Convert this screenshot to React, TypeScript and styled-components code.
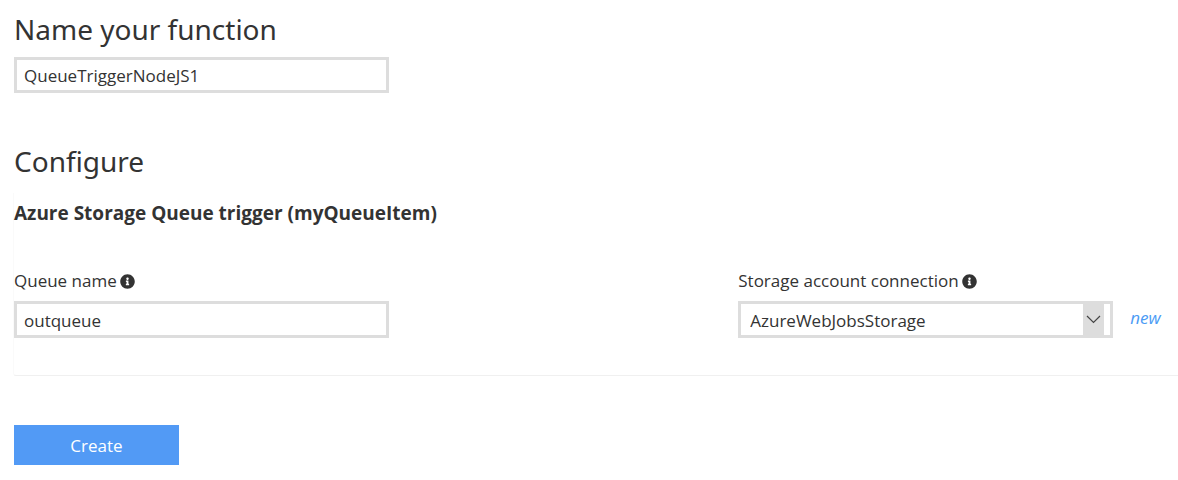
import React from 'react';
import styled, { createGlobalStyle } from 'styled-components';
import { FaInfoCircle } from 'react-icons/fa';

const GlobalStyle = createGlobalStyle`
  *, *::before, *::after { box-sizing: border-box; }
  body {
    margin: 0;
    background: #fff;
    color: #333;
    font-family: 'Segoe UI', 'Open Sans', 'Noto Sans', sans-serif;
    font-size: 17px;
    line-height: 24px;
  }
`;

const Form = styled.form`
  display: flex;
  flex-direction: column;
  align-items: flex-start;
  padding: 9px 0 15px 13px;
`;

const Section = styled.section`
  padding-left: 1px;
`;

const Heading = styled.h2`
  margin: 0;
  font-family: 'Segoe UI', 'Noto Sans', sans-serif;
  font-size: 28px;
  font-weight: 400;
  line-height: 40px;
`;

const NameInputRow = styled.div`
  padding-top: 8px;
  margin-bottom: 48px;
`;

const TextInput = styled.input<{ $tall?: boolean }>`
  display: block;
  width: 375px;
  max-width: 100%;
  height: ${({ $tall }) => ($tall ? 37 : 36)}px;
  padding: ${({ $tall }) => ($tall ? 2 : 0)}px 7px 0;
  border: 3px solid #ddd;
  border-radius: 0;
  background: #fff;
  color: inherit;
  font: inherit;
  outline: none;
`;

const Binding = styled.fieldset`
  align-self: stretch;
  min-width: 0;
  margin: 12px 0 0;
  padding: 8px 0 37px;
  border: solid;
  border-width: 0 0 1px 1px;
  border-color: #f5f5f5 #f5f5f5 #f0f0f0 #fafafa;
  border-bottom-left-radius: 3px;
`;

const BindingTitle = styled.h3`
  margin: 0 0 44px;
  font-size: 19px;
  font-weight: 700;
  line-height: 24px;
`;

const Fields = styled.div`
  display: grid;
  grid-template-columns: 28fr 17fr;
`;

const Field = styled.div`
  min-width: 0;
`;

const FieldLabel = styled.label`
  display: flex;
  align-items: center;
  gap: 3px;
  margin-bottom: 8px;
`;

const InfoIcon = styled(FaInfoCircle)`
  width: 15px;
  height: 15px;
`;

const SelectRow = styled.div`
  display: flex;
  align-items: center;
  gap: 17px;
`;

const SelectBox = styled.div`
  position: relative;
  width: 375px;
  height: 37px;
  border: 3px solid #ddd;
`;

const Select = styled.select`
  display: block;
  width: 100%;
  height: 100%;
  padding: 2px 32px 0 9px;
  border: 0;
  border-radius: 0;
  background: transparent;
  color: inherit;
  font: inherit;
  appearance: none;
  outline: none;
`;

const Arrow = styled.span`
  position: absolute;
  top: 0;
  right: 6px;
  bottom: 0;
  display: flex;
  align-items: center;
  justify-content: center;
  width: 21px;
  background: #ddd;
  pointer-events: none;
`;

const NewLink = styled.a`
  padding-bottom: 4px;
  color: #4a9bf5;
  font-style: italic;
  text-decoration: none;
`;

const CreateButton = styled.button`
  width: 165px;
  height: 40px;
  margin: 49px 0 0 1px;
  padding: 2px 0 0;
  border: 0;
  background: #529af5;
  color: #fff;
  font: inherit;
  cursor: pointer;
`;

export default function App() {
  return (
    <>
      <GlobalStyle />
      <Form onSubmit={(event) => event.preventDefault()}>
        <Section>
          <Heading as="label" htmlFor="function-name">Name your function</Heading>
          <NameInputRow>
            <TextInput id="function-name" defaultValue="QueueTriggerNodeJS1" spellCheck={false} />
          </NameInputRow>
          <Heading>Configure</Heading>
        </Section>
        <Binding aria-labelledby="binding-title">
          <BindingTitle id="binding-title">Azure Storage Queue trigger (myQueueItem)</BindingTitle>
          <Fields>
            <Field>
              <FieldLabel htmlFor="queue-name">
                Queue name
                <InfoIcon aria-hidden />
              </FieldLabel>
              <TextInput $tall id="queue-name" defaultValue="outqueue" spellCheck={false} />
            </Field>
            <Field>
              <FieldLabel htmlFor="storage-connection">
                Storage account connection
                <InfoIcon aria-hidden />
              </FieldLabel>
              <SelectRow>
                <SelectBox>
                  <Select id="storage-connection" defaultValue="AzureWebJobsStorage">
                    <option>AzureWebJobsStorage</option>
                  </Select>
                  <Arrow>
                    <svg width="15" height="9" viewBox="0 0 15 9" fill="none" stroke="#444" strokeWidth="1.2" aria-hidden>
                      <path d="M1 1 7.500 7.500 14 1" />
                    </svg>
                  </Arrow>
                </SelectBox>
                <NewLink href="#new">new</NewLink>
              </SelectRow>
            </Field>
          </Fields>
        </Binding>
        <CreateButton type="submit">Create</CreateButton>
      </Form>
    </>
  );
}
